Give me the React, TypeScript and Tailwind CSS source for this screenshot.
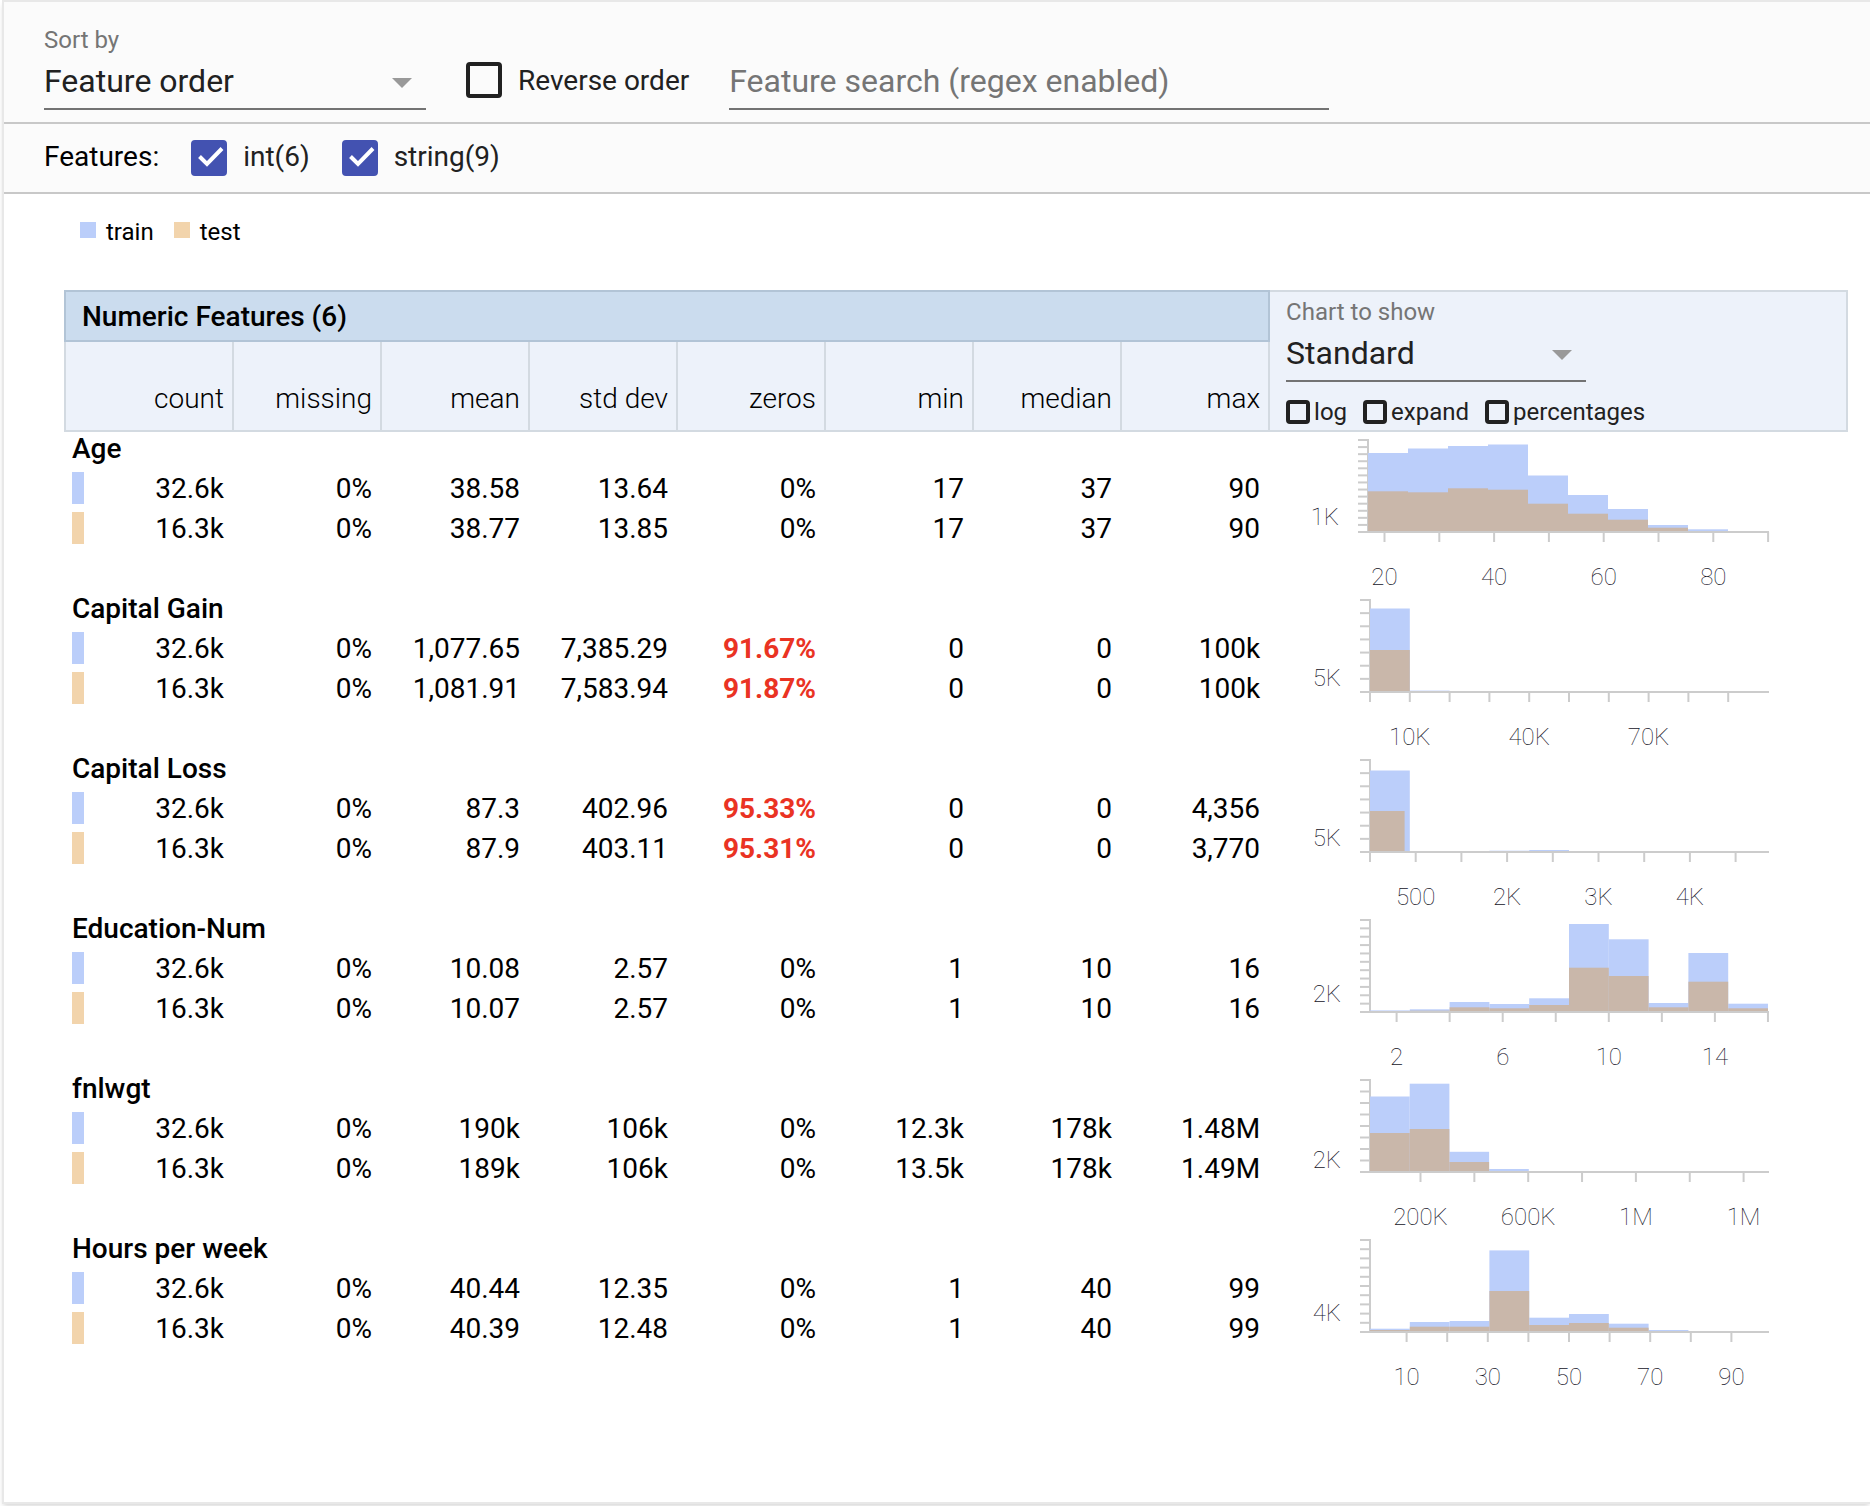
import { useState } from "react";

type Chart = {
  axis: number;
  yTicks: number;
  yLabel: string;
  yLabelTick: number;
  xStart: number;
  xStep: number;
  xCount: number;
  xLabels: { tick: number; text: string }[];
  binWidth: number;
  testBinWidth?: number;
  train: number[];
  test: number[];
};

type Feature = { name: string; train: string[]; test: string[]; chart: Chart };

const COLUMNS = ["count", "missing", "mean", "std dev", "zeros", "min", "median", "max"];
const ZEROS_COLUMN = 4;

// chart geometry shared by every histogram
const BASE = 100;
const TOP = 8;
const RIGHT = 478;

const FEATURES: Feature[] = [
  {
    name: "Age",
    train: ["32.6k", "0%", "38.58", "13.64", "0%", "17", "37", "90"],
    test: ["16.3k", "0%", "38.77", "13.85", "0%", "17", "37", "90"],
    chart: {
      axis: 78, yTicks: 14, yLabel: "1K", yLabelTick: 2,
      xStart: 94.5, xStep: 54.8, xCount: 8,
      xLabels: [{ tick: 0, text: "20" }, { tick: 2, text: "40" }, { tick: 4, text: "60" }, { tick: 6, text: "80" }],
      binWidth: 40,
      train: [79, 83.5, 86, 87.5, 56.5, 37, 23, 7, 2.7],
      test: [40.7, 39.7, 43.7, 42.3, 28.3, 18.3, 12.3, 4.3, 1],
    },
  },
  {
    name: "Capital Gain",
    train: ["32.6k", "0%", "1,077.65", "7,385.29", "91.67%", "0", "0", "100k"],
    test: ["16.3k", "0%", "1,081.91", "7,583.94", "91.87%", "0", "0", "100k"],
    chart: {
      axis: 80, yTicks: 8, yLabel: "5K", yLabelTick: 1,
      xStart: 80, xStep: 39.8, xCount: 10,
      xLabels: [{ tick: 1, text: "10K" }, { tick: 4, text: "40K" }, { tick: 7, text: "70K" }],
      binWidth: 39.8,
      train: [83.5, 1.4],
      test: [42],
    },
  },
  {
    name: "Capital Loss",
    train: ["32.6k", "0%", "87.3", "402.96", "95.33%", "0", "0", "4,356"],
    test: ["16.3k", "0%", "87.9", "403.11", "95.31%", "0", "0", "3,770"],
    chart: {
      axis: 80, yTicks: 8, yLabel: "5K", yLabelTick: 1,
      xStart: 80, xStep: 45.7, xCount: 9,
      xLabels: [{ tick: 1, text: "500" }, { tick: 3, text: "2K" }, { tick: 5, text: "3K" }, { tick: 7, text: "4K" }],
      binWidth: 39.8,
      testBinWidth: 34.6,
      train: [81.5, 0, 0, 1.3, 2],
      test: [41],
    },
  },
  {
    name: "Education-Num",
    train: ["32.6k", "0%", "10.08", "2.57", "0%", "1", "10", "16"],
    test: ["16.3k", "0%", "10.07", "2.57", "0%", "1", "10", "16"],
    chart: {
      axis: 80, yTicks: 12, yLabel: "2K", yLabelTick: 2,
      xStart: 106.6, xStep: 53.05, xCount: 8,
      xLabels: [{ tick: 0, text: "2" }, { tick: 2, text: "6" }, { tick: 4, text: "10" }, { tick: 6, text: "14" }],
      binWidth: 39.8,
      train: [1.6, 2.7, 10, 8, 13.7, 88, 72.7, 9, 59, 8.3],
      test: [0.5, 1.3, 4.7, 3.7, 7, 44.3, 36, 4.7, 30.3, 3.7],
    },
  },
  {
    name: "fnlwgt",
    train: ["32.6k", "0%", "190k", "106k", "0%", "12.3k", "178k", "1.48M"],
    test: ["16.3k", "0%", "189k", "106k", "0%", "13.5k", "178k", "1.49M"],
    chart: {
      axis: 80, yTicks: 9, yLabel: "2K", yLabelTick: 1,
      xStart: 130.5, xStep: 53.85, xCount: 7,
      xLabels: [{ tick: 0, text: "200K" }, { tick: 2, text: "600K" }, { tick: 4, text: "1M" }, { tick: 6, text: "1M" }],
      binWidth: 39.7,
      train: [75.5, 88.3, 20.2, 3, 0.5],
      test: [39, 43, 10, 1],
    },
  },
  {
    name: "Hours per week",
    train: ["32.6k", "0%", "40.44", "12.35", "0%", "1", "40", "99"],
    test: ["16.3k", "0%", "40.39", "12.48", "0%", "1", "40", "99"],
    chart: {
      axis: 80, yTicks: 11, yLabel: "4K", yLabelTick: 2,
      xStart: 116.6, xStep: 40.6, xCount: 9,
      xLabels: [
        { tick: 0, text: "10" }, { tick: 2, text: "30" }, { tick: 4, text: "50" },
        { tick: 6, text: "70" }, { tick: 8, text: "90" },
      ],
      binWidth: 39.8,
      train: [3.3, 10, 11, 81.6, 14.3, 18, 8.3, 2, 0.5],
      test: [2, 5.3, 5.3, 41, 7, 9, 4.3, 0.7],
    },
  },
];

function Histogram({ name, chart }: { name: string; chart: Chart }) {
  const yStep = (BASE - TOP) / (chart.yTicks - 1);
  const testBin = chart.testBinWidth ?? chart.binWidth;
  const tickX = (i: number) => chart.xStart + i * chart.xStep;

  return (
    <svg width="500" height="160" viewBox="0 0 500 160" role="img" aria-label={`${name} histogram`} className="block">
      <g stroke="#cccccc" strokeWidth="2">
        <path d={`M${chart.axis - 10} ${TOP}H${chart.axis}V${BASE}`} fill="none" />
        {Array.from({ length: chart.yTicks }, (_, i) => (
          <line key={i} x1={chart.axis - 10} x2={chart.axis} y1={BASE - i * yStep} y2={BASE - i * yStep} />
        ))}
        {Array.from({ length: chart.xCount }, (_, i) => (
          <line key={i} x1={tickX(i)} x2={tickX(i)} y1={BASE} y2={BASE + 10} />
        ))}
      </g>
      <g fill="#bbcefa">
        {chart.train.map((h, i) => (
          <rect key={i} x={chart.axis + i * chart.binWidth} y={BASE - h} width={chart.binWidth} height={h} />
        ))}
      </g>
      <g fill="#c9b7aa">
        {chart.test.map((h, i) => (
          <rect key={i} x={chart.axis + i * testBin} y={BASE - h} width={testBin} height={h} />
        ))}
      </g>
      <line x1={chart.axis - 1} x2={RIGHT + 1} y1={BASE} y2={BASE} stroke="#cccccc" strokeWidth="2" />
      <g className="text-[24px] font-thin" fill="#14131f">
        <text x={chart.axis - 29} y={BASE - chart.yLabelTick * yStep + 7} textAnchor="end">
          {chart.yLabel}
        </text>
        {chart.xLabels.map(({ tick, text }) => (
          <text key={tick} x={tickX(tick)} y="153" textAnchor="middle">
            {text}
          </text>
        ))}
      </g>
    </svg>
  );
}

function Dropdown({ id, label, options, className }: { id: string; label: string; options: string[]; className: string }) {
  return (
    <div className={className}>
      <label htmlFor={id} className="block text-[24px] leading-7 text-[#757575]">
        {label}
      </label>
      <div className="relative">
        <select
          id={id}
          className="block h-14 w-full appearance-none border-b-2 border-[#737373] bg-transparent text-[32px] text-[#212121] outline-none"
        >
          {options.map((o) => (
            <option key={o}>{o}</option>
          ))}
        </select>
        <svg width="20" height="10" viewBox="0 0 20 10" className="pointer-events-none absolute right-3.5 top-6">
          <path d="M0 0H20L10 10Z" fill="#999999" />
        </svg>
      </div>
    </div>
  );
}

function TypeCheckbox({ label }: { label: string }) {
  const [checked, setChecked] = useState(true);
  return (
    <label className="flex gap-4 text-[#212121]">
      <span className="relative size-9">
        <input
          type="checkbox"
          checked={checked}
          onChange={(e) => setChecked(e.target.checked)}
          className="block size-9 appearance-none rounded border-4 border-[#212121] checked:border-[#4352b1] checked:bg-[#4352b1]"
        />
        {checked && (
          <svg viewBox="0 0 36 36" className="pointer-events-none absolute inset-0 size-9">
            <path d="M8.5 16.5L16 24L31 8.5" fill="none" stroke="#ffffff" strokeWidth="4" />
          </svg>
        )}
      </span>
      {label}
    </label>
  );
}

function StatsRow({ values, swatch }: { values: string[]; swatch: string }) {
  return (
    <tr className="h-10 align-top">
      {values.map((v, i) => {
        if (i === 0) {
          return (
            <td key={i} className="pl-2 pr-2.5">
              <div className="flex justify-between">
                <span className={`h-8 w-3 ${swatch}`} />
                {v}
              </div>
            </td>
          );
        }
        const alert = i === ZEROS_COLUMN && v !== "0%";
        return (
          <td key={i} className={alert ? "pr-2.5 text-right font-bold text-[#ea3323]" : "pr-2.5 text-right"}>
            {v}
          </td>
        );
      })}
    </tr>
  );
}

export default function App() {
  return (
    <div className="pb-0.5 pl-0.5 font-[Roboto,sans-serif] text-[28px] leading-[34px] text-black">
      <main className="border-2 border-r-0 border-[#e8e8e8] bg-white pb-[110px] shadow-md">
        <div className="flex items-end gap-10 border-b-2 border-[#c8c8c8] bg-[#fbfbfb] pb-3 pl-10 pt-6">
          <Dropdown
            id="sort"
            label="Sort by"
            options={["Feature order", "Non-uniformity", "Alphabetical", "Amount missing/zero"]}
            className="w-[382px]"
          />
          <label className="mb-3 flex h-9 gap-4 leading-[38px] text-[#212121]">
            <input
              type="checkbox"
              className="size-9 appearance-none rounded border-4 border-[#212121] checked:bg-[#4352b1]"
            />
            Reverse order
          </label>
          <input
            type="text"
            aria-label="Feature search"
            placeholder="Feature search (regex enabled)"
            className="h-14 w-[600px] border-b-2 border-[#737373] text-[32px] text-[#212121] outline-none placeholder:text-[#757575]"
          />
        </div>

        <div className="flex gap-8 border-b-2 border-[#c8c8c8] bg-[#fbfbfb] py-4 pl-10">
          <span>Features:</span>
          <TypeCheckbox label="int(6)" />
          <TypeCheckbox label="string(9)" />
        </div>

        <div className="flex gap-5 pl-19 pt-6 text-[24px] leading-7">
          <span className="flex gap-2.5">
            <span className="mt-1 size-4 bg-[#bbcefa]" />
            train
          </span>
          <span className="flex gap-2.5">
            <span className="mt-1 size-4 bg-[#f2d4ac]" />
            test
          </span>
        </div>

        <div className="mt-11 pl-15 pr-[22px]">
          <table className="w-full table-fixed border-separate border-spacing-0">
            <colgroup>
              <col className="w-[170px]" />
              {COLUMNS.slice(1).map((c) => (
                <col key={c} className="w-[148px]" />
              ))}
              <col />
            </colgroup>
            <thead>
              <tr>
                <th colSpan={8} className="border-2 border-[#b2c4d6] bg-[#cbdcee] px-4 pb-1.5 pt-2 text-left font-medium">
                  Numeric Features (6)
                </th>
                <td
                  rowSpan={2}
                  className="border-2 border-l-0 border-[#d3dae1] bg-[#edf2fa] pb-1.5 pl-4 pt-1.5 align-top"
                >
                  <Dropdown
                    id="chart"
                    label="Chart to show"
                    options={["Standard", "Cumulative", "Quantiles"]}
                    className="w-[300px]"
                  />
                  <div className="mt-4.5 flex gap-4 text-[24px] leading-6 text-[#212121]">
                    {["log", "expand", "percentages"].map((o) => (
                      <label key={o} className="flex gap-1">
                        <input
                          type="checkbox"
                          className="size-6 appearance-none rounded border-4 border-[#212121] checked:bg-[#4352b1]"
                        />
                        {o}
                      </label>
                    ))}
                  </div>
                </td>
              </tr>
              <tr>
                {COLUMNS.map((c) => (
                  <th
                    key={c}
                    className="border-b-2 border-r-2 border-[#d3dae1] bg-[#edf2fa] pb-3.5 pr-2 pt-10 text-right font-light first:border-l-2"
                  >
                    {c}
                  </th>
                ))}
              </tr>
            </thead>
            {FEATURES.map((f) => (
              <tbody key={f.name}>
                <tr className="h-10 align-top">
                  <th colSpan={8} className="pl-2 text-left font-medium">
                    {f.name}
                  </th>
                  <td rowSpan={4} className="pl-5">
                    <Histogram name={f.name} chart={f.chart} />
                  </td>
                </tr>
                <StatsRow values={f.train} swatch="bg-[#bbcefa]" />
                <StatsRow values={f.test} swatch="bg-[#f2d4ac]" />
                <tr className="h-10">
                  <td colSpan={8} />
                </tr>
              </tbody>
            ))}
          </table>
        </div>
      </main>
    </div>
  );
}
